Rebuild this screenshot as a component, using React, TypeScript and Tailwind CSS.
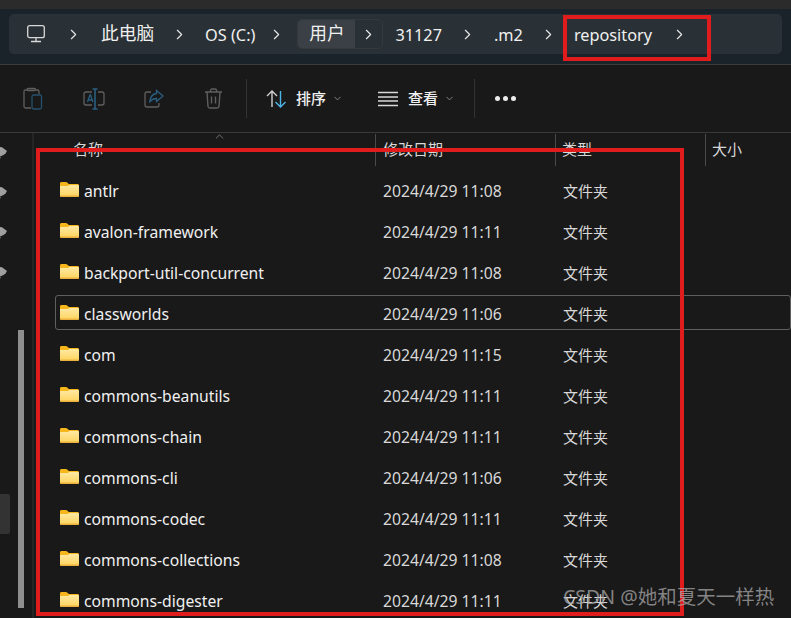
import { ChevronDown, ChevronRight, ChevronUp } from 'lucide-react'

const font = "font-['Noto_Sans','Noto_Sans_CJK_SC',sans-serif]"

const folders = [
	{ name: 'antlr', time: '2024/4/29 11:08' },
	{ name: 'avalon-framework', time: '2024/4/29 11:11' },
	{ name: 'backport-util-concurrent', time: '2024/4/29 11:08' },
	{ name: 'classworlds', time: '2024/4/29 11:06', focused: true },
	{ name: 'com', time: '2024/4/29 11:15' },
	{ name: 'commons-beanutils', time: '2024/4/29 11:11' },
	{ name: 'commons-chain', time: '2024/4/29 11:11' },
	{ name: 'commons-cli', time: '2024/4/29 11:06' },
	{ name: 'commons-codec', time: '2024/4/29 11:11' },
	{ name: 'commons-collections', time: '2024/4/29 11:08' },
	{ name: 'commons-digester', time: '2024/4/29 11:11' },
]

function Crumb({ children, cjk }: { children: React.ReactNode; cjk?: boolean }) {
	return (
		<span className={`leading-none text-[#f0f0f0] whitespace-nowrap ${cjk ? 'text-[17.700px]' : 'text-[16.300px] pt-[2px]'}`}>
			{children}
		</span>
	)
}

function Sep({ width = 'w-[51px]' }: { width?: string }) {
	return (
		<span className={`flex justify-center shrink-0 ${width}`}>
			<ChevronRight className="w-[17px] h-[17px] text-[#e8e8e8]" strokeWidth={1.6} />
		</span>
	)
}

function FolderIcon() {
	return (
		<svg width="19" height="15" viewBox="0 0 19 15" className="shrink-0 -mt-[3px]">
			<defs>
				<linearGradient id="folderBody" x1="0" y1="0" x2="0" y2="1">
					<stop offset="0" stopColor="#ffe9a3" />
					<stop offset="1" stopColor="#fdd35c" />
				</linearGradient>
			</defs>
			<path d="M0 1.500C0 .6.6 0 1.500 0h4.300c.6 0 1 .2 1.400.6L8.800 2H17.500C18.400 2 19 2.600 19 3.500V6H0z" fill="#f6b61c" />
			<path d="M0 4h7.800l1.700-1h8C18.400 3 19 3.600 19 4.500v9c0 .9-.6 1.500-1.500 1.500h-16C.6 15 0 14.400 0 13.500z" fill="url(#folderBody)" />
			<path d="M0 13.400h19v.1c0 .9-.6 1.500-1.500 1.500h-16C.6 15 0 14.400 0 13.500z" fill="#ecb13c" />
		</svg>
	)
}

function PinStub() {
	return (
		<svg width="7" height="14" viewBox="0 0 7 14" className="shrink-0">
			<path d="M0 1l2 .2L7 5 5.500 7.500 3.500 9 0 10.500z" fill="#a0a0a0" />
			<path d="M0 11.500 1.500 10.500 0 13z" fill="#777777" />
		</svg>
	)
}

function Toolbar() {
	return (
		<div className="h-[68px] flex items-center bg-[#191919] border-t border-[#3d3d3d] pl-[23px] shrink-0">
			{/* paste */}
			<svg width="20" height="24" viewBox="0 0 20 24" fill="none" strokeWidth="1.300" className="mr-[40px] shrink-0">
				<path d="M4 3H2.500C1.500 3 1 3.600 1 4.500v15c0 1 .5 1.500 1.500 1.500H8" stroke="#5f5f5f" />
				<path d="M5 1.500h6.500c.6 0 1 .4 1 1s-.4 1-1 1H5c-.6 0-1-.4-1-1s.4-1 1-1z" stroke="#5f5f5f" />
				<path d="M13 3h1.500c1 0 1.500.6 1.500 1.500V7" stroke="#5f5f5f" />
				<rect x="9" y="8" width="9.500" height="14" rx="1.800" stroke="#24516d" />
			</svg>
			{/* rename */}
			<svg width="22" height="22" viewBox="0 0 22 22" fill="none" strokeWidth="1.300" className="mr-[39px] shrink-0">
				<path d="M9 4H3C1.800 4 1 4.800 1 6v9c0 1.200.8 2 2 2h6M15 4h4c1.200 0 2 .8 2 2v9c0 1.200-.8 2-2 2h-4" stroke="#5f5f5f" />
				<path d="M12 1v20M9.500 1h5M9.500 21h5" stroke="#2a5f82" strokeWidth="1.600" />
				<path d="M4.500 14 7 7h.5L10 14M5.500 12h3.500" stroke="#2a5f82" />
			</svg>
			{/* share */}
			<svg width="20" height="20" viewBox="0 0 20 20" fill="none" strokeWidth="1.300" className="mr-[40px] shrink-0">
				<path d="M7 3H3C1.800 3 1 3.800 1 5v11c0 1.200.8 2 2 2h10c1.200 0 2-.8 2-2v-2" stroke="#5f5f5f" />
				<path d="M12.500 1.500 19 7l-6.500 5.500V9.500C9 9.500 7 11 5.500 13.500 6 9 8 5 12.500 4.500z" stroke="#2a5f82" />
			</svg>
			{/* trash */}
			<svg width="19" height="21" viewBox="0 0 19 21" fill="none" stroke="#5f5f5f" strokeWidth="1.400" className="shrink-0">
				<path d="M1 4h17M6.500 4V2.500C6.500 1.600 7.100 1 8 1h3c.9 0 1.500.6 1.500 1.500V4M3 4l1 14.500c.1 1 .8 1.500 1.700 1.500h7.600c.9 0 1.600-.5 1.700-1.500L16 4M7.500 8.500v7M11.500 8.500v7" />
			</svg>
			<div className="w-px h-[39px] bg-[#333333] ml-[23px] mr-[19px]" />
			{/* sort */}
			<svg width="21" height="20" viewBox="0 0 21 20" fill="none" strokeWidth="1.400" className="mr-[9px] shrink-0">
				<path d="M6 18V2M1 7l5-5 5 5" stroke="#d0d0d0" />
				<path d="M14.500 2v16M9.500 13l5 5 5-5" stroke="#4cb5e8" />
			</svg>
			<span className="w-[30px] text-[15px] font-medium text-[#f0f0f0] leading-none whitespace-nowrap">排序</span>
			<span className="w-[52px] pl-[6px] shrink-0 flex">
				<ChevronDown className="w-[11px] h-[11px] text-[#b0b0b0]" strokeWidth={1.500} />
			</span>
			{/* view */}
			<svg width="20" height="16" viewBox="0 0 20 16" fill="none" stroke="#d8d8d8" strokeWidth="1.300" className="mr-[10px] shrink-0">
				<path d="M0 1.500h20M0 6h20M0 10h20M0 14.500h20" />
			</svg>
			<span className="w-[30px] text-[15px] font-medium text-[#f0f0f0] leading-none whitespace-nowrap">查看</span>
			<span className="w-[17px] pl-[6px] shrink-0 flex">
				<ChevronDown className="w-[11px] h-[11px] text-[#b0b0b0]" strokeWidth={1.500} />
			</span>
			<div className="w-px h-[39px] bg-[#333333] ml-[19px] mr-[20px]" />
			{/* more */}
			<div className="flex gap-[3px]">
				<span className="w-[5px] h-[5px] rounded-full bg-[#ececec]" />
				<span className="w-[5px] h-[5px] rounded-full bg-[#ececec]" />
				<span className="w-[5px] h-[5px] rounded-full bg-[#ececec]" />
			</div>
		</div>
	)
}

function Row({ name, time, focused }: { name: string; time: string; focused?: boolean }) {
	return (
		<div className="h-[41px] flex items-center ml-[21px] shrink-0">
			<div
				className={`w-full h-[35px] pt-[3px] grid grid-cols-[327px_180px_1fr] items-center border rounded-[3px] ${
					focused ? 'border-[#5f5f5f]' : 'border-transparent'
				}`}
			>
				<div className="flex items-center gap-[5px] pl-[4px]">
					<FolderIcon />
					<span className="pt-[2px] text-[15.700px] text-[#f0f0f0] leading-none whitespace-nowrap">{name}</span>
				</div>
				<span className="pt-[2px] text-[15.700px] text-[#d8d8d8] leading-none whitespace-nowrap">{time}</span>
				<span className="text-[15px] text-[#d8d8d8] leading-none whitespace-nowrap">文件夹</span>
			</div>
		</div>
	)
}

function ColumnHeader({ label, className }: { label: string; className: string }) {
	return (
		<div className={`h-[32px] flex items-center border-r border-[#4a4a4a] pb-[2px] ${className}`}>
			<span className="text-[15px] text-[#d8d8d8] leading-none">{label}</span>
		</div>
	)
}

export default function App() {
	return (
		<div className={`relative w-[791px] h-[618px] overflow-hidden flex flex-col bg-[#191919] ${font}`}>
			<div className="h-[9px] bg-[#2b2b2b] shrink-0" />

			{/* address bar */}
			<div className="h-[55px] bg-[#1a2329] px-[9px] pt-[5px] shrink-0">
				<div className="h-[40px] w-[773px] rounded-[5px] bg-[#2a3136] flex items-center pl-[18px]">
					<svg width="18" height="18" viewBox="0 0 18 18" fill="none" stroke="#d8d8d8" strokeWidth="1.300" className="shrink-0">
						<rect x=".7" y=".7" width="16.600" height="12" rx="2" />
						<path d="M9 13v3M4 16.500h10" />
					</svg>
					<Sep width="w-[56px]" />
					<Crumb cjk>此电脑</Crumb>
					<Sep />
					<Crumb>OS (C:)</Crumb>
					<Sep width="w-[42px]" />
					<div className="h-[30px] w-[86px] flex rounded-[5px] border border-[#33393d] overflow-hidden shrink-0">
						<div className="w-[57px] bg-[#3a4045] flex items-center justify-center">
							<Crumb cjk>用户</Crumb>
						</div>
						<div className="flex-1 flex items-center justify-center">
							<ChevronRight className="w-[17px] h-[17px] text-[#e8e8e8]" strokeWidth={1.600} />
						</div>
					</div>
					<span className="w-[12px] shrink-0" />
					<Crumb>31127</Crumb>
					<Sep width="w-[52px]" />
					<Crumb>.m2</Crumb>
					<Sep />
					<Crumb>repository</Crumb>
					<Sep width="w-[54px]" />
				</div>
			</div>

			<Toolbar />

			<div className="flex flex-1 min-h-0 border-t border-[#3a3a3a]">
				{/* collapsed navigation pane */}
				<div className="relative w-[34px] shrink-0 border-r-2 border-[#262626] flex flex-col pt-[13px]">
					<div className="flex flex-col gap-[26px]">
						<PinStub />
						<PinStub />
						<PinStub />
						<PinStub />
					</div>
					<div className="absolute left-[18px] top-[197px] w-[6px] h-[278px] bg-[#8f8f8f]" />
					<div className="absolute left-0 top-[361px] w-[10px] h-[40px] rounded-r-[2px] bg-[#333333]" />
				</div>

				<div className="flex-1 min-w-0 flex flex-col">
					<div className="relative flex shrink-0 pt-px">
						<ColumnHeader label="名称" className="w-[342px] pl-[39px]" />
						<ColumnHeader label="修改日期" className="w-[180px] pl-[7px]" />
						<ColumnHeader label="类型" className="w-[150px] pl-[6px]" />
						<div className="h-[32px] flex items-center pl-[6px] pb-[2px]">
							<span className="text-[15px] text-[#d8d8d8] leading-none">大小</span>
						</div>
						<ChevronUp className="absolute left-[179px] top-[-3px] w-[13px] h-[13px] text-[#9a9a9a]" strokeWidth={1.300} />
					</div>
					<div className="pt-[3px] flex flex-col">
						{folders.map(f => (
							<Row key={f.name} {...f} />
						))}
					</div>
				</div>
			</div>

			{/* annotations on top of the screenshot */}
			<div className="absolute left-[563px] top-[15px] w-[148px] h-[46px] border-[4px] border-[#e01c1c]" />
			<div className="absolute left-[36px] top-[148px] w-[648px] h-[468px] border-[4px] border-[#e01c1c]" />
			<div className="absolute left-[563px] top-[585px] text-[19.500px] leading-[24px] text-[#a8a8a8]/75 whitespace-nowrap">CSDN @她和夏天一样热</div>
		</div>
	)
}
